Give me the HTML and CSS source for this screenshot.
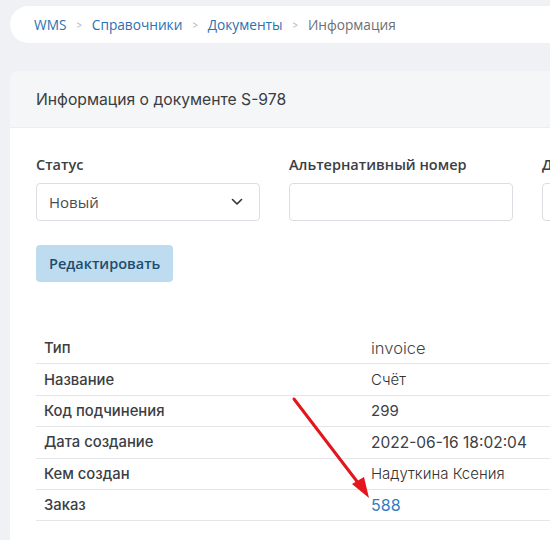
FILE: index.html
```html
<!DOCTYPE html>
<html lang="ru">
<head>
<meta charset="utf-8">
<link rel="stylesheet" href="styles.css">
</head>
<body>
<div class="page">
  <nav class="crumbs">
    <a class="crumb-link" href="#">WMS</a>
    <span class="sep">&gt;</span>
    <a class="crumb-link" href="#">Справочники</a>
    <span class="sep">&gt;</span>
    <a class="crumb-link" href="#">Документы</a>
    <span class="sep">&gt;</span>
    <span class="crumb-current">Информация</span>
  </nav>

  <section class="card">
    <header class="card-head">Информация о документе S-978</header>
    <div class="card-body">
      <div class="fields">
        <div class="field">
          <label class="field-label">Статус</label>
          <div class="control select">
            <span>Новый</span>
            <svg class="chev" width="12" height="8" viewBox="0 0 12 8"><path d="M1.5 1.5 L6 6 L10.5 1.5" fill="none" stroke="#333" stroke-width="1.6" stroke-linecap="round" stroke-linejoin="round"/></svg>
          </div>
        </div>
        <div class="field">
          <label class="field-label">Альтернативный номер</label>
          <div class="control"></div>
        </div>
        <div class="field">
          <label class="field-label">Дата</label>
          <div class="control"></div>
        </div>
      </div>
      <button class="btn">Редактировать</button>

      <table class="info">
        <tr><td class="k">Тип</td><td class="v v-big">invoice</td></tr>
        <tr><td class="k">Название</td><td class="v v-light">Счёт</td></tr>
        <tr><td class="k">Код подчинения</td><td class="v">299</td></tr>
        <tr><td class="k">Дата создание</td><td class="v v-date">2022-06-16 18:02:04</td></tr>
        <tr><td class="k">Кем создан</td><td class="v v-light">Надуткина Ксения</td></tr>
        <tr><td class="k">Заказ</td><td class="v"><a class="order-link" href="#">588</a></td></tr>
      </table>
    </div>
  </section>

  <svg class="arrow" width="550" height="540" viewBox="0 0 550 540">
    <line x1="294" y1="399" x2="362" y2="488" stroke="#e3161d" stroke-width="3" stroke-linecap="round"/>
    <polygon points="369,498 352,484 364,477" fill="#e3161d"/>
  </svg>
</div>
</body>
</html>
```
FILE: styles.css
```css
html, body {
  margin: 0;
  padding: 0;
}
body {
  background: #eff1f5;
  overflow: hidden;
  width: 550px;
  height: 540px;
}
.page {
  position: relative;
  width: 800px;
  padding: 6px 0 0 10px;
}
.crumbs {
  display: flex;
  align-items: center;
  height: 37px;
  background: #fff;
  border-radius: 19px 0 0 19px;
  padding-left: 24px;
  font-family: "Open Sans", sans-serif;
  font-size: 13.7px;
}
.crumb-link {
  color: #2a71b3;
  text-decoration: none;
}
.sep {
  color: #a9adb3;
  font-size: 11px;
  margin: 0 9.5px;
  transform: scaleX(0.8);
}
.crumb-current {
  color: #6b6f75;
}
.card {
  margin-top: 28px;
  background: #fff;
  border-radius: 10px 0 0 0;
  overflow: hidden;
}
.card-head {
  height: 56px;
  display: flex;
  align-items: center;
  padding-left: 26px;
  background: #f5f6f8;
  border-bottom: 1px solid #eceef1;
  font-family: Inter, sans-serif;
  font-size: 15.7px;
  color: #3a3d42;
}
.card-body {
  padding: 26px 26px 40px;
}
.fields {
  display: flex;
  gap: 29px;
}
.field {
  width: 224px;
  display: flex;
  flex-direction: column;
}
.field-label {
  font-family: "Open Sans", sans-serif;
  font-weight: 600;
  font-size: 14.5px;
  color: #3b3e43;
  line-height: 22px;
  margin-bottom: 7px;
}
.control {
  height: 36px;
  border: 1px solid #dadde1;
  border-radius: 4px;
  background: #fff;
  display: flex;
  align-items: center;
  justify-content: space-between;
  padding: 0 16px 0 12px;
  font-family: "Open Sans", sans-serif;
  font-size: 15px;
  color: #4a4d52;
}
.chev {
  display: block;
}
.btn {
  margin-top: 24px;
  height: 37px;
  padding: 0 13px;
  border: 0;
  border-radius: 4px;
  background: #bddcef;
  color: #1f4c6e;
  font-family: "Open Sans", sans-serif;
  font-weight: 600;
  font-size: 14.5px;
}
.info {
  margin-top: 51px;
  width: 600px;
  border-collapse: collapse;
}
.info td {
  height: 30.4px;
  padding: 0;
  border-bottom: 1px solid #e4e6e9;
  vertical-align: middle;
}
.k {
  width: 335px;
  padding-left: 8px !important;
  box-sizing: border-box;
  font-family: Inter, sans-serif;
  font-weight: 500;
  font-size: 14.8px;
  color: #3b3e43;
}
.v {
  font-family: Inter, sans-serif;
  font-size: 15px;
  color: #3d4045;
}
.v-light {
  font-weight: 300;
  color: #333;
}
.v-date {
  font-size: 15.5px;
}
.v-big {
  font-size: 16.5px;
  font-weight: 300;
  color: #444;
}
.order-link {
  color: #2f7cbf;
  text-decoration: none;
  font-size: 16px;
}
.arrow {
  position: absolute;
  left: 0;
  top: 0;
  pointer-events: none;
}
```
